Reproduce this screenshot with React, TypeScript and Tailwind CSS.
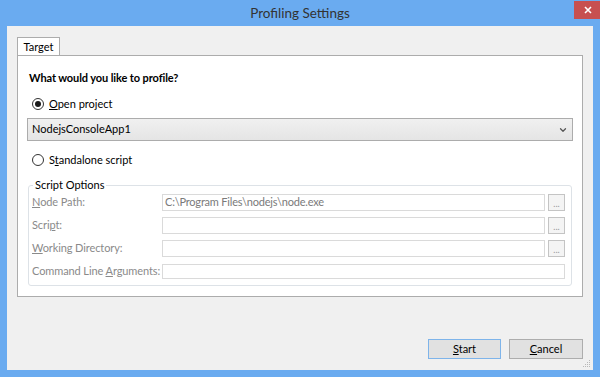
import { ChevronDown } from "lucide-react";

const font = { fontFamily: '"Segoe UI", Lato, "Liberation Sans", sans-serif' };

function Radio({ checked, label, mnemonic }: { checked?: boolean; label: string; mnemonic: number }) {
  return (
    <div className="flex h-[16px] items-center pl-[14px]">
      <span className="flex h-[12px] w-[12px] items-center justify-center rounded-full border border-[#333333] bg-white">
        {checked && <span className="h-[6px] w-[6px] rounded-full bg-[#1a1a1a]" />}
      </span>
      <span className="ml-[5px] text-[11px] text-black">
        {label.slice(0, mnemonic)}
        <u>{label[mnemonic]}</u>
        {label.slice(mnemonic + 1)}
      </span>
    </div>
  );
}

function Field({
  label,
  mnemonic,
  value,
  browse,
  short,
}: {
  label: string;
  mnemonic: number;
  value?: string;
  browse?: boolean;
  short?: boolean;
}) {
  return (
    <div className="flex items-center">
      <span className="w-[133px] shrink-0 whitespace-nowrap pl-[3px] text-[11px] tracking-[-0.1px] text-[#8a8a8a]">
        {label.slice(0, mnemonic)}
        <u>{label[mnemonic]}</u>
        {label.slice(mnemonic + 1)}
      </span>
      <div
        className={`flex flex-1 items-center border border-[#dadada] bg-white pl-[2px] text-[11px] tracking-[-0.2px] text-[#7a7a7a] ${
          short ? "h-[15px]" : "h-[17px]"
        }`}
      >
        {value}
      </div>
      {browse && (
        <div className="ml-[3px] flex h-[17px] w-[17px] items-end justify-center border border-[#c4c4c4] bg-[#f4f4f4] pb-[2px] text-[9px] leading-none text-[#9a9a9a]">
          ...
        </div>
      )}
    </div>
  );
}

export default function App() {
  return (
    <div className="flex h-[377px] w-[600px] flex-col bg-[#6aabf0] px-[7px] pb-[7px]" style={font}>
      <div className="relative flex h-[26px] shrink-0 items-center justify-center">
        <span className="text-[13.5px] text-[#333333]">Profiling Settings</span>
        <div className="absolute right-[-8px] top-[1px] flex h-[18px] w-[27px] items-center justify-center bg-[#c75050]">
          <svg width="8" height="8" viewBox="0 0 8 8">
            <path d="M1 1 L7 7 M7 1 L1 7" stroke="white" strokeWidth="1.6" />
          </svg>
        </div>
      </div>

      <div className="relative flex flex-1 flex-col bg-[#f0f0f0] px-[10px] pt-[11px]">
        <div className="flex">
          <div className="-mb-px flex h-[19px] w-[43px] items-center justify-center border border-b-0 border-[#acacac] bg-white text-[11px] text-black">
            Target
          </div>
        </div>
        <div className="flex h-[242px] flex-col border border-[#acacac] bg-white pt-[14px]">
          <div className="pl-[11px] text-[11px] font-bold leading-[16px] tracking-[-0.1px] text-black">
            What would you like to profile?
          </div>
          <div className="mt-[10px]">
            <Radio checked label="Open project" mnemonic={0} />
          </div>
          <div className="mx-[9px] mt-[6px] flex h-[23px] items-center justify-between border border-[#acacac] bg-gradient-to-b from-[#f0f0f0] to-[#e5e5e5] pl-[4px] pr-[4px] text-[11px] text-black">
            <span>NodejsConsoleApp1</span>
            <ChevronDown size={10} strokeWidth={3} className="text-[#555555]" />
          </div>
          <div className="mt-[11px]">
            <Radio label="Standalone script" mnemonic={1} />
          </div>
          <div className="relative mx-[10px] mt-[17px] flex h-[101px] flex-col gap-[6px] rounded-[3px] border border-[#dde2e7] pl-0 pr-[6px] pt-[8px]">
            <span className="absolute left-[4px] top-[-9px] bg-white px-[2px] text-[11px] leading-[16px] text-black">
              Script Options
            </span>
            <Field label="Node Path:" mnemonic={0} value="C:\Program Files\nodejs\node.exe" browse />
            <Field label="Script:" mnemonic={4} browse />
            <Field label="Working Directory:" mnemonic={0} browse />
            <Field label="Command Line Arguments:" mnemonic={13} short />
          </div>
        </div>

        <div className="mt-auto mb-[11px] flex justify-end gap-[8px]">
          <div className="flex h-[20px] w-[73px] items-center justify-center border border-[#7eb4ea] bg-[#e1e1e1] text-[11px] text-black">
            <span>
              <u>S</u>tart
            </span>
          </div>
          <div className="flex h-[20px] w-[74px] items-center justify-center border border-[#adadad] bg-[#e1e1e1] text-[11px] text-black">
            <span>
              <u>C</u>ancel
            </span>
          </div>
        </div>
        <svg className="absolute bottom-[2px] right-[2px]" width="8" height="8" viewBox="0 0 8 8">
          <rect x="6" y="0" width="1" height="1" fill="#b8b8b8" />
          <rect x="4" y="2" width="1" height="1" fill="#b8b8b8" />
          <rect x="6" y="2" width="1" height="1" fill="#b8b8b8" />
          <rect x="2" y="4" width="1" height="1" fill="#b8b8b8" />
          <rect x="4" y="4" width="1" height="1" fill="#b8b8b8" />
          <rect x="6" y="4" width="1" height="1" fill="#b8b8b8" />
          <rect x="0" y="6" width="1" height="1" fill="#b8b8b8" />
          <rect x="2" y="6" width="1" height="1" fill="#b8b8b8" />
          <rect x="4" y="6" width="1" height="1" fill="#b8b8b8" />
          <rect x="6" y="6" width="1" height="1" fill="#b8b8b8" />
        </svg>
      </div>
    </div>
  );
}
